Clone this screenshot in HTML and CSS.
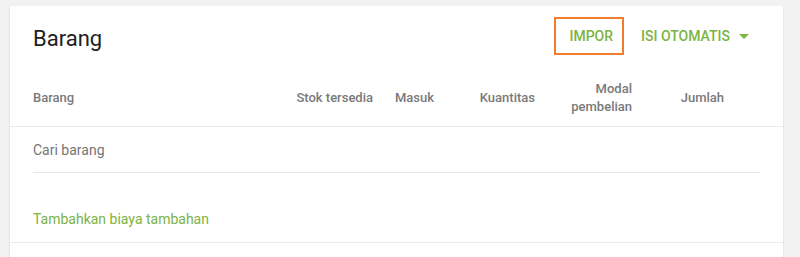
FILE: index.html
```html
<!DOCTYPE html>
<html lang="id">
<head>
  <meta charset="UTF-8">
  <title>Barang</title>
  <link rel="stylesheet" href="styles.css">
</head>
<body>
  <div class="card">
    <div class="card-head">
      <h1 class="title">Barang</h1>
      <div class="actions">
        <button class="btn-text btn-import">IMPOR</button>
        <button class="btn-text btn-auto">ISI OTOMATIS <span class="caret"></span></button>
      </div>
    </div>

    <div class="table-head">
      <div class="col col-name">Barang</div>
      <div class="col">Stok tersedia</div>
      <div class="col">Masuk</div>
      <div class="col">Kuantitas</div>
      <div class="col">Modal<br>pembelian</div>
      <div class="col">Jumlah</div>
    </div>

    <div class="search-row">
      <input class="search" type="text" placeholder="Cari barang">
    </div>

    <div class="extra-row">
      <a class="link" href="#">Tambahkan biaya tambahan</a>
    </div>

    <div class="rest"></div>
  </div>
</body>
</html>
```

FILE: styles.css
```css
body{
  margin: 0;
  background-color: #f2f2f2;
  font-family: Roboto, "Liberation Sans", sans-serif;
  overflow: hidden;
}
.card{
  margin: 6px 17px 0 10px;
  background-color: #fff;
  box-shadow: 0 1px 2px rgba(0,0,0,0.12);
  height: 300px;
}
.card-head{
  display: flex;
  align-items: center;
  justify-content: space-between;
  height: 64px;
  padding: 0 34px 0 23px;
  box-sizing: border-box;
}
.title{
  margin: 0;
  font-size: 22px;
  font-weight: 400;
  color: #212121;
  padding-top: 1px;
}
.actions{
  display: flex;
  align-items: center;
  gap: 17px;
  margin-top: -4px;
}
.btn-text{
  background: none;
  border: none;
  font-family: inherit;
  font-size: 14px;
  font-weight: 500;
  color: #7cb342;
  cursor: pointer;
  padding: 0;
  display: flex;
  align-items: center;
}
.btn-import{
  border: 2px solid #ee7d2f;
  height: 38px;
  padding: 0 9px 0 13px;
  box-sizing: border-box;
}
.caret{
  display: inline-block;
  width: 0;
  height: 0;
  border-left: 5px solid transparent;
  border-right: 5px solid transparent;
  border-top: 5px solid #7cb342;
  margin-left: 9px;
}
.table-head{
  display: grid;
  grid-template-columns: 1fr 100px 61px 101px 97px 92px;
  align-items: center;
  height: 56px;
  padding: 0 59px 0 23px;
  border-bottom: 1px solid #ebebeb;
  font-size: 13px;
  font-weight: 500;
  line-height: 18px;
  color: #7a7a7a;
}
.col{
  text-align: right;
}
.col-name{
  text-align: left;
}
.search-row{
  padding: 0 23px;
}
.search{
  display: block;
  width: 100%;
  box-sizing: border-box;
  height: 46px;
  border: none;
  border-bottom: 1px solid #e6e6e6;
  outline: none;
  padding: 0;
  font-family: inherit;
  font-size: 14px;
  color: #212121;
}
.search::placeholder{
  color: #757575;
}
.extra-row{
  display: flex;
  align-items: center;
  height: 70px;
  padding: 22px 23px 0 23px;
  box-sizing: border-box;
  border-bottom: 1px solid #ebebeb;
}
.link{
  font-size: 14px;
  color: #7cb342;
  text-decoration: none;
}
```
